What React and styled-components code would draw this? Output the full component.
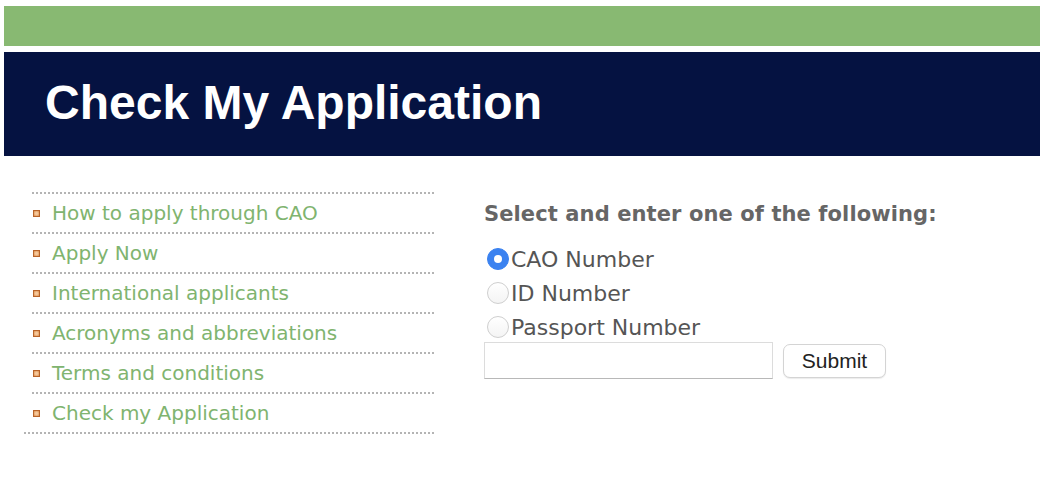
import React from 'react'
import styled, { createGlobalStyle } from 'styled-components';

const GlobalStyle = createGlobalStyle`
    body {
        margin: 0;
        background: #ffffff;
        font-family: "DejaVu Sans", Verdana, sans-serif;
    }
`;

const links = [
    'How to apply through CAO',
    'Apply Now',
    'International applicants',
    'Acronyms and abbreviations',
    'Terms and conditions',
    'Check my Application',
];

const options = [
    { id: 'cao', label: 'CAO Number', checked: true },
    { id: 'id', label: 'ID Number' },
    { id: 'passport', label: 'Passport Number' },
];

export default function App() {
    return (
        <>
            <GlobalStyle />
            <Page>
                <TopBar />
                <Banner>
                    <Title>Check My Application</Title>
                </Banner>
                <Main>
                    <Sidebar>
                        <LinkList>
                            {links.map((l) => (
                                <LinkItem key={l}>
                                    <Bullet />
                                    <NavLink href="#">{l}</NavLink>
                                </LinkItem>
                            ))}
                        </LinkList>
                    </Sidebar>
                    <FormPanel>
                        <Heading>Select and enter one of the following:</Heading>
                        {options.map((o) => (
                            <RadioRow key={o.id}>
                                <Radio $checked={o.checked} />
                                <RadioLabel>{o.label}</RadioLabel>
                            </RadioRow>
                        ))}
                        <InputRow>
                            <TextInput type="text" />
                            <SubmitButton>Submit</SubmitButton>
                        </InputRow>
                    </FormPanel>
                </Main>
            </Page>
        </>
    );
}

const Page = styled.div`
    width: 1040px;
    height: 480px;
    overflow: hidden;
`;

const TopBar = styled.div`
    margin: 6px 0 0 4px;
    height: 40px;
    background: #88b972;
`;

const Banner = styled.header`
    margin: 6px 0 0 4px;
    height: 104px;
    background: #051241;
    display: flex;
    align-items: center;
    padding-left: 41px;
`;

const Title = styled.h1`
    margin: 0;
    color: #ffffff;
    font-family: "Liberation Sans", Arial, sans-serif;
    font-size: 48px;
    font-weight: 700;
    line-height: 1;
    padding-bottom: 2px;
`;

const Main = styled.div`
    display: flex;
    padding-top: 36px;
`;

const Sidebar = styled.nav`
    width: 410px;
    margin-left: 24px;
`;

const LinkList = styled.ul`
    list-style: none;
    margin: 0;
    padding: 0;
    border-bottom: 2px dotted #b4b4b4;
`;

const LinkItem = styled.li`
    margin-left: 8px;
    height: 38px;
    border-top: 2px dotted #b4b4b4;
    display: flex;
    align-items: center;
`;

const Bullet = styled.span`
    box-sizing: border-box;
    width: 7px;
    height: 7px;
    margin-left: 1px;
    margin-right: 12px;
    margin-top: 1px;
    background: radial-gradient(circle, #f6c89a 30%, #d98a48 100%);
    border: 1px solid #b8642a;
    flex-shrink: 0;
`;

const NavLink = styled.a`
    color: #80b46f;
    text-decoration: none;
    font-size: 20px;
`;

const FormPanel = styled.form`
    margin-left: 50px;
    padding-top: 10px;
`;

const Heading = styled.h3`
    margin: 0 0 16px;
    color: #666666;
    font-size: 21px;
    line-height: 24px;
    font-weight: 700;
    letter-spacing: 0.1px;
`;

const RadioRow = styled.label`
    display: flex;
    align-items: center;
    height: 34px;
    color: #555555;
    font-size: 22px;
`;

const Radio = styled.span`
    box-sizing: border-box;
    width: 22px;
    height: 22px;
    margin-left: 3px;
    border-radius: 50%;
    flex-shrink: 0;
    position: relative;
    background: ${({ $checked }) => ($checked ? '#3b82f0' : 'linear-gradient(#ffffff, #f4f4f4)')};
    border: 1px solid ${({ $checked }) => ($checked ? '#3b82f0' : '#cfcfcf')};
    &::after {
        content: '';
        display: ${({ $checked }) => ($checked ? 'block' : 'none')};
        position: absolute;
        left: 50%;
        top: 50%;
        width: 8px;
        height: 8px;
        margin: -4px 0 0 -4px;
        border-radius: 50%;
        background: #ffffff;
    }
`;

const RadioLabel = styled.span`
    margin-left: 2px;
`;

const InputRow = styled.div`
    display: flex;
    align-items: center;
    gap: 10px;
    margin-top: -2px;
`;

const TextInput = styled.input`
    box-sizing: border-box;
    width: 289px;
    height: 37px;
    border: 1px solid #dcdcdc;
    border-bottom-color: #b8b8b8;
    background: #ffffff;
    outline: none;
`;

const SubmitButton = styled.button`
    box-sizing: border-box;
    width: 103px;
    height: 34px;
    border: 1px solid #d4d4d4;
    border-radius: 7px;
    background: #ffffff;
    box-shadow: 0 1px 1px rgba(0, 0, 0, 0.08);
    font-family: "Liberation Sans", Arial, sans-serif;
    font-size: 21px;
    color: #222222;
    padding: 0;
`;
